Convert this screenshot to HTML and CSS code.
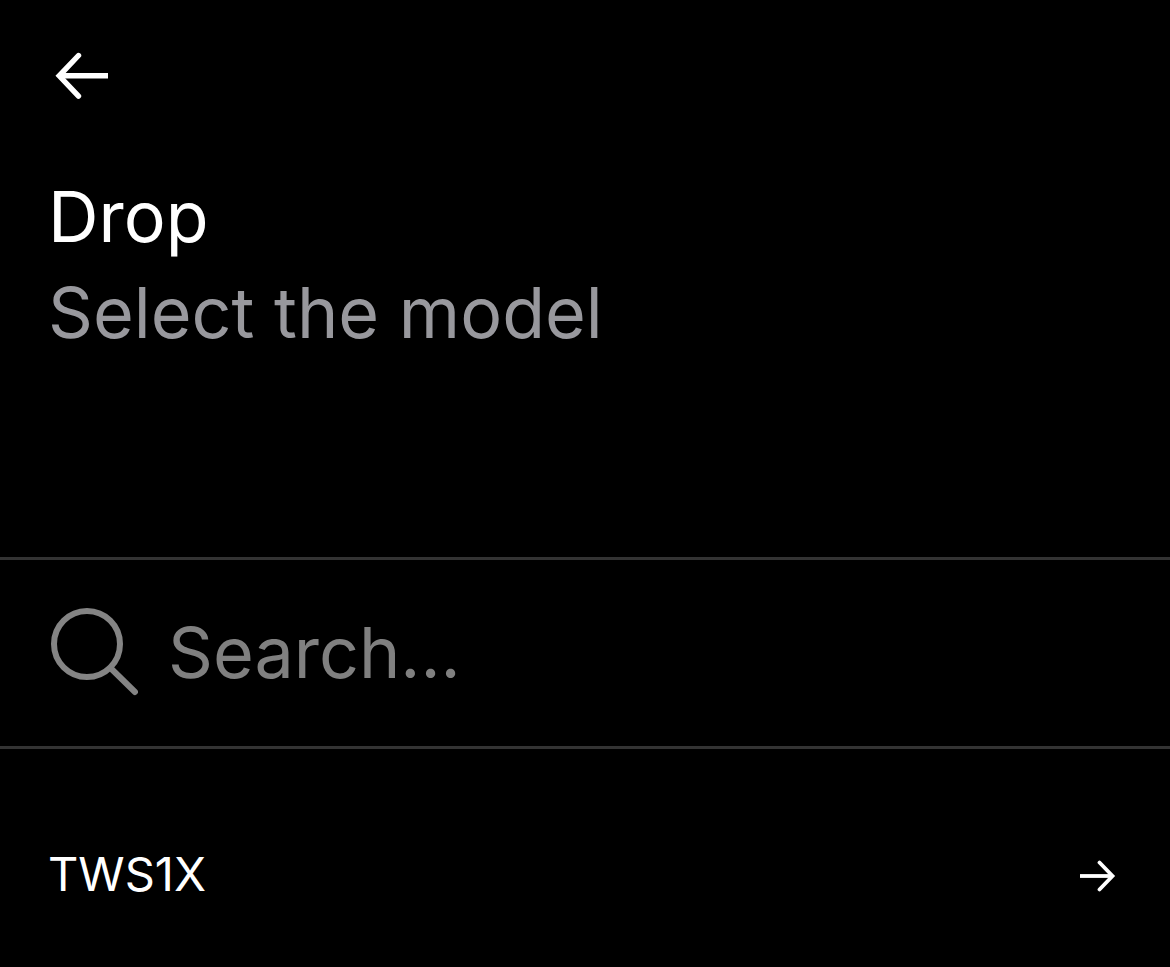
FILE: index.html
```html
<!DOCTYPE html>
<html lang="en">
  <head>
    <meta charset="UTF-8" />
    <meta name="viewport" content="width=device-width, initial-scale=1.0" />
    <title>Drop - Select the model</title>
    <link rel="stylesheet" href="styles.css">
  </head>
  <body>
    <header class="header">
      <button class="back" type="button" aria-label="Back">
        <svg width="60" height="48" viewBox="0 0 60 48" fill="none" stroke="#fff" stroke-width="5.4">
          <path d="M60 23.8H12" />
          <path d="M30.5 3.5L11.2 23.8L30.5 44.1" stroke-linecap="round" />
        </svg>
      </button>
      <h1 class="title">Drop</h1>
      <p class="subtitle">Select the model</p>
    </header>

    <main>
      <div class="search">
        <label for="search" aria-label="Search">
          <svg width="90" height="88" viewBox="0 0 90 88" fill="none" stroke="#848484" stroke-width="6">
            <circle cx="39" cy="36" r="33" />
            <path d="M62.5 60L87 84" stroke-linecap="round" />
          </svg>
        </label>
        <input type="text" id="search" placeholder="Search..." />
      </div>

      <a class="model" href="#">
        <span>TWS1X</span>
        <svg width="36" height="36" viewBox="0 0 36 36" fill="none" stroke="#fff" stroke-width="3.8">
          <path d="M0 20H32" />
          <path d="M19.5 6.5L32.5 20L19.5 33.5" stroke-linecap="round" />
        </svg>
      </a>
    </main>
  </body>
</html>
```

FILE: styles.css
```css
body {
  margin: 0;
  background: #000;
  color: #fff;
  font-family: Inter, sans-serif;
}
.header {
  padding: 52px 48px 196px;
}
.back {
  display: block;
  padding: 0;
  border: 0;
  background: none;
  cursor: pointer;
}
svg {
  display: block;
}
.title,
.subtitle {
  margin: 0;
  font-size: 70px;
  font-weight: 400;
  line-height: 96px;
}
.title {
  margin-top: 69px;
}
.subtitle {
  color: #98989d;
}
.search {
  display: flex;
  align-items: center;
  gap: 30px;
  padding: 48px 48px 50px;
  border-top: 3px solid #333;
  border-bottom: 3px solid #333;
}
.search input {
  flex: 1;
  min-width: 0;
  height: 88px;
  padding: 0;
  border: 0;
  outline: none;
  background: none;
  color: #fff;
  font: inherit;
  font-size: 70px;
}
.search input::placeholder {
  color: #808080;
}
.model {
  display: flex;
  align-items: center;
  justify-content: space-between;
  padding: 93px 54px 60px 48px;
  color: #fff;
  font-size: 47px;
  line-height: 64px;
  text-decoration: none;
}
```
